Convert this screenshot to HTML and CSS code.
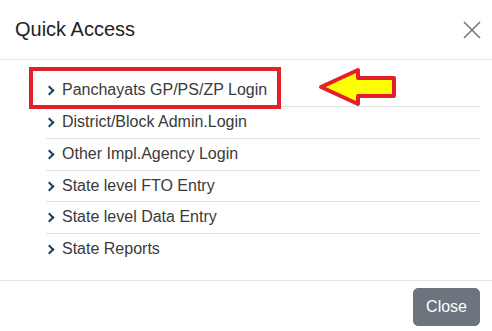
FILE: index.html
```html
<!DOCTYPE html>
<html lang="en">
<head>
  <meta charset="UTF-8">
  <meta name="viewport" content="width=device-width, initial-scale=1.0">
  <title>Quick Access</title>
  <link rel="stylesheet" href="styles.css">
</head>
<body>
  <div class="modal-content">
    <div class="modal-header">
      <h4 class="modal-title">Quick Access</h4>
      <button class="close-x" type="button" aria-label="Close">
        <svg width="18" height="18" viewBox="0 0 18 18">
          <path d="M1 1 L17 17 M17 1 L1 17" stroke="#777" stroke-width="1.6" fill="none"/>
        </svg>
      </button>
    </div>

    <div class="modal-body">
      <ul class="quick-list">
        <li><a href="#"><span class="chev"></span>Panchayats GP/PS/ZP Login</a></li>
        <li><a href="#"><span class="chev"></span>District/Block Admin.Login</a></li>
        <li><a href="#"><span class="chev"></span>Other Impl.Agency Login</a></li>
        <li><a href="#"><span class="chev"></span>State level FTO Entry</a></li>
        <li><a href="#"><span class="chev"></span>State level Data Entry</a></li>
        <li><a href="#"><span class="chev"></span>State Reports</a></li>
      </ul>
    </div>

    <div class="modal-footer">
      <button type="button" class="btn-close">Close</button>
    </div>

    <!-- annotation drawn over the list -->
    <div class="highlight-box"></div>
    <svg class="pointer-arrow" width="84" height="42" viewBox="0 0 84 42">
      <polygon points="5,21 42,4 42,12 78,12 78,30 42,30 42,38" fill="#ffff00" stroke="#e3202a" stroke-width="4" stroke-linejoin="round"/>
    </svg>
  </div>
</body>
</html>
```

FILE: styles.css
```css
body {
  margin: 0;
  padding: 0;
  background-color: #fff;
  font-family: 'Liberation Sans', Arial, sans-serif;
  color: #333;
}

.modal-content {
  position: relative;
  width: 492px;
  height: 331px;
  background-color: #fff;
}

.modal-header {
  display: flex;
  justify-content: space-between;
  align-items: center;
  padding: 15px 11px 15px 15px;
  border-bottom: 1px solid #e5e5e5;
}

.modal-title {
  margin: 0;
  font-size: 20px;
  font-weight: normal;
  line-height: 29px;
  color: #222;
}

.close-x {
  display: flex;
  padding: 0;
  border: none;
  background: none;
  cursor: pointer;
}

.modal-body {
  padding: 15px 12px 15px 15px;
}

.quick-list {
  list-style: none;
  margin: 0;
  padding: 0 0 0 31px;
}

.quick-list li {
  border-bottom: 1px solid #e3e3e3;
}

.quick-list li:last-child {
  border-bottom: none;
}

.quick-list a {
  display: flex;
  align-items: center;
  padding: 4px 0;
  font-size: 16px;
  line-height: 22.86px;
  color: #3a3a3a;
  text-decoration: none;
}

.chev {
  width: 5px;
  height: 5px;
  margin: 0 9px 0 0;
  border-top: 2.5px solid #1c3f60;
  border-right: 2.5px solid #1c3f60;
  transform: rotate(45deg);
}

.modal-footer {
  display: flex;
  justify-content: flex-end;
  padding: 7px 12px;
  border-top: 1px solid #e5e5e5;
}

.btn-close {
  padding: 6px 12px;
  font-family: 'Liberation Sans', Arial, sans-serif;
  font-size: 16px;
  line-height: 24px;
  color: #fff;
  background-color: #6c757d;
  border: 1px solid #6c757d;
  border-radius: 5px;
  cursor: pointer;
}

.highlight-box {
  position: absolute;
  left: 29px;
  top: 67px;
  width: 244px;
  height: 34px;
  border: 4px solid #e3202a;
}

.pointer-arrow {
  position: absolute;
  left: 316px;
  top: 66px;
}
```
